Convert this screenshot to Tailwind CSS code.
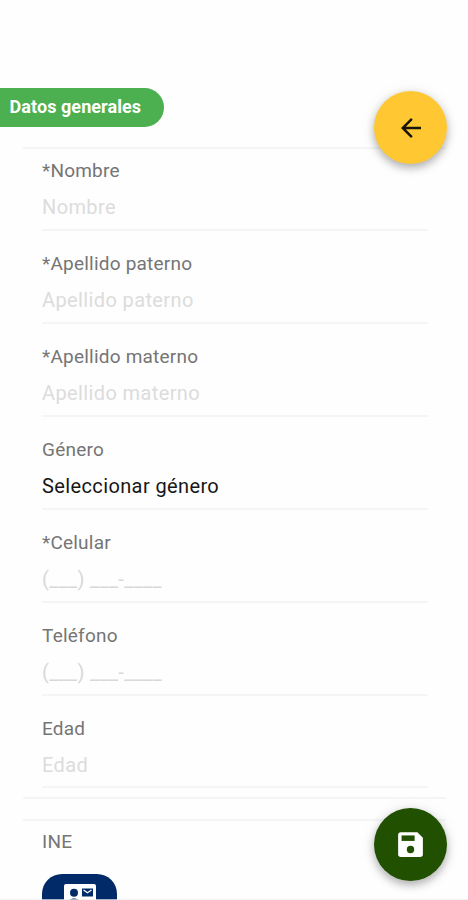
<!DOCTYPE html>
<html lang="es">
<head>
<meta charset="utf-8">
<title>Datos generales</title>
<script src="https://cdn.jsdelivr.net/npm/@tailwindcss/browser@4"></script>
</head>
<body class="bg-[#fefefe]">
<main class="relative h-[900px] w-[468px] overflow-hidden bg-[#fefefe] pt-[88px] font-[Roboto,sans-serif] text-[#757575]">
  <h1 class="flex h-[39px] w-[164px] items-center rounded-r-full bg-[#4caf50] pb-[3px] pl-[9.5px] text-[18px] font-bold tracking-[0.07px] whitespace-nowrap text-white">Datos generales</h1>

  <section class="mt-5 mr-[22px] ml-[23px] h-[652px] border-y-2 border-[#f5f5f5] pr-[18px] pl-[19px]">
    <div class="h-[82px] border-b-2 border-[#f5f5f5] pt-[10px]">
      <div class="h-6 text-[19px] leading-6 tracking-[0.22px]">*Nombre</div>
      <div class="mt-3 h-6 text-[20px] leading-6 tracking-[0.38px] text-[#dcdcdc]">Nombre</div>
    </div>
    <div class="h-[93px] border-b-2 border-[#f5f5f5] pt-[21px]">
      <div class="h-6 text-[19px] leading-6 tracking-[0.22px]">*Apellido paterno</div>
      <div class="mt-3 h-6 text-[20px] leading-6 tracking-[0.38px] text-[#dcdcdc]">Apellido paterno</div>
    </div>
    <div class="h-[93px] border-b-2 border-[#f5f5f5] pt-[21px]">
      <div class="h-6 text-[19px] leading-6 tracking-[0.22px]">*Apellido materno</div>
      <div class="mt-3 h-6 text-[20px] leading-6 tracking-[0.38px] text-[#dcdcdc]">Apellido materno</div>
    </div>
    <div class="h-[93px] border-b-2 border-[#f5f5f5] pt-[21px]">
      <div class="h-6 text-[19px] leading-6 tracking-[0.22px]">Género</div>
      <div class="mt-3 h-6 text-[20px] leading-6 tracking-[0.38px] text-[#171717]">Seleccionar género</div>
    </div>
    <div class="h-[93px] border-b-2 border-[#f5f5f5] pt-[21px]">
      <div class="h-6 text-[19px] leading-6 tracking-[0.22px]">*Celular</div>
      <div class="mt-3 h-6 text-[20px] leading-6 tracking-[0.38px] text-[#d8d8d8]">(___) ___-____</div>
    </div>
    <div class="h-[93px] border-b-2 border-[#f5f5f5] pt-[21px]">
      <div class="h-6 text-[19px] leading-6 tracking-[0.22px]">Teléfono</div>
      <div class="mt-3 h-6 text-[20px] leading-6 tracking-[0.38px] text-[#d8d8d8]">(___) ___-____</div>
    </div>
    <div class="h-[92px] border-b-2 border-[#f5f5f5] pt-[21px]">
      <div class="h-6 text-[19px] leading-6 tracking-[0.22px]">Edad</div>
      <div class="mt-3 h-6 text-[20px] leading-6 tracking-[0.38px] text-[#dcdcdc]">Edad</div>
    </div>
  </section>

  <section class="mt-5 mr-[22px] ml-[23px] border-t-2 border-[#f5f5f5] pt-[9px] pl-[19px]">
    <div class="h-6 text-[19px] leading-6 tracking-[0.22px]">INE</div>
    <button aria-label="INE" class="mt-5 flex h-[50px] w-[75px] justify-center rounded-[20px] bg-[#012a68] pt-[10px]">
      <svg width="32" height="27" viewBox="0 0 32 27">
        <rect width="32" height="27" rx="2" fill="#fff"/>
        <circle cx="10" cy="8.700" r="4" fill="#012a68"/>
        <path d="M4 21v-2c0-3 3-4.500 6-4.500s6 1.500 6 4.500v2z" fill="#012a68"/>
        <path d="M18 4.500h11v8H18z" fill="#012a68"/>
        <path d="M19.500 6l4 2.700 4-2.700" fill="none" stroke="#fff" stroke-width="1.300"/>
      </svg>
    </button>
  </section>

  <button aria-label="Regresar" class="absolute top-[91px] left-[374px] flex size-[73px] items-center justify-center rounded-full bg-[#ffc832] shadow-[0_4px_8px_rgba(0,0,0,0.28),0_1px_16px_rgba(0,0,0,0.08)]">
    <svg width="30" height="30" viewBox="0 0 24 24" fill="#17140a"><path d="M20 11H7.830l5.590-5.590L12 4l-8 8 8 8 1.410-1.410L7.830 13H20v-2z"/></svg>
  </button>
  <button aria-label="Guardar" class="absolute top-[808px] left-[374px] flex size-[73px] items-center justify-center rounded-full bg-[#205000] shadow-[0_4px_8px_rgba(0,0,0,0.28),0_1px_16px_rgba(0,0,0,0.08)]">
    <svg width="33" height="33" viewBox="0 0 24 24"><path d="M17 3H5a2 2 0 0 0-2 2v14a2 2 0 0 0 2 2h14a2 2 0 0 0 2-2V7z" fill="#fff"/><path d="M5.500 5.400H15v4H5.500z" fill="#205000"/><circle cx="12" cy="15.600" r="2.700" fill="#205000"/></svg>
  </button>
  <div class="absolute bottom-0 left-0 h-px w-full bg-[#eeeeee]/70"></div>
</main>
</body>
</html>
